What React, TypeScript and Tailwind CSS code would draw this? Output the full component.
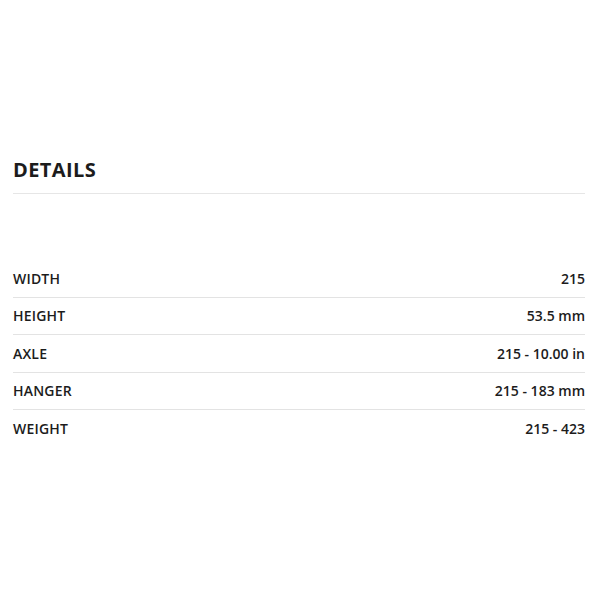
import React from "react";

const rows = [
  ["WIDTH", "215"],
  ["HEIGHT", "53.5 mm"],
  ["AXLE", "215 - 10.00 in"],
  ["HANGER", "215 - 183 mm"],
  ["WEIGHT", "215 - 423"],
];

export default function App() {
  return (
    <div className="w-[600px] h-[600px] bg-white pl-[13px] pr-[15px] text-[#1c1c1c]" style={{ fontFamily: '"Open Sans", "Liberation Sans", sans-serif' }}>
      <div className="pt-[156px]">
        <h2 className="text-[20px] leading-[28px] font-bold tracking-[0.4px] pb-[9px] border-b border-[#e6e6e6]">DETAILS</h2>
      </div>
      <div className="mt-[66px] flex flex-col">
        {rows.map(([k, v], i) => (
          <div
            key={k}
            className={`flex items-center justify-between h-[37.5px] text-[14px] font-semibold ${i < rows.length - 1 ? "border-b border-[#e3e3e3]" : ""}`}
          >
            <span className="tracking-[0.2px]">{k}</span>
            <span>{v}</span>
          </div>
        ))}
      </div>
    </div>
  );
}
